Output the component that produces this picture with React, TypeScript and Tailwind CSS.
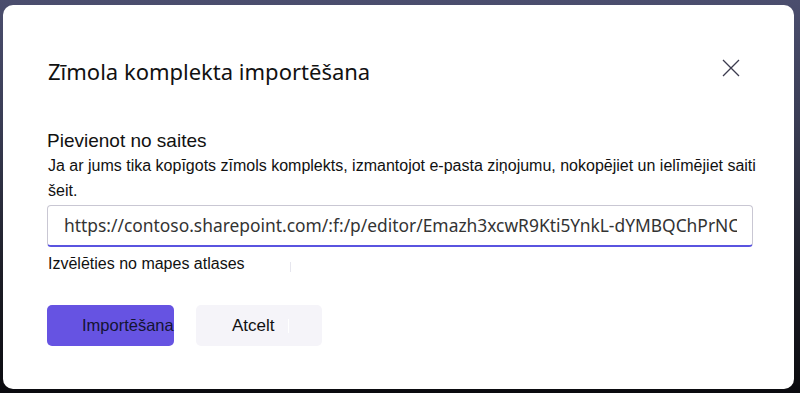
import React from "react";

export default function App() {
  return (
    <div className="w-[800px] h-[393px] overflow-hidden bg-[linear-gradient(180deg,#4b4e6e_0%,#3a3d55_30%,#1c1d26_70%,#0b0b0f_100%)] pt-[5px] pl-[3px] pr-[6px] pb-[4px]">
      <div className="h-full w-full bg-white rounded-[10px] pl-[44px] pr-[42px] pt-[51px] flex flex-col">
        <div className="flex items-start justify-between">
          <h1
            className="text-[22px] leading-[30px] text-[#111] pl-[1px]"
            style={{ fontFamily: '"Noto Sans", "Open Sans", sans-serif' }}
          >
            Zīmola komplekta importēšana
          </h1>
          <svg width="18" height="18" viewBox="0 0 18 18" className="mr-[12px] mt-[3px]">
            <path d="M1 1 L17 17 M17 1 L1 17" stroke="#3c3b4f" strokeWidth="1.3" fill="none" />
          </svg>
        </div>
        <div
          className="mt-[44px] text-[19px] leading-[22px] text-[#111]"
          style={{ fontFamily: '"Liberation Sans", Arial, sans-serif' }}
        >
          Pievienot no saites
        </div>
        <p
          className="mt-[1px] w-[712px] text-[16px] leading-[25px] text-[#111] pl-[1px]"
          style={{ fontFamily: '"Liberation Sans", Arial, sans-serif' }}
        >
          Ja ar jums tika kopīgots zīmols komplekts, izmantojot e-pasta ziņojumu, nokopējiet un ielīmējiet saiti šeit.
        </p>
        <div className="mt-[2px] h-[42px] w-[706px] rounded-[4px] border border-[#c9c7d3] border-b-[2px] border-b-[#5a54e0] pl-[16px] pr-[15px] flex items-center overflow-hidden">
          <span
            className="whitespace-nowrap overflow-hidden text-[17.4px] text-[#333] block"
            style={{ fontFamily: '"Noto Sans", "Open Sans", sans-serif' }}
          >
            https://contoso.sharepoint.com/:f:/p/editor/Emazh3xcwR9Kti5YnkL-dYMBQChPrNC
          </span>
        </div>
        <div className="mt-[6px] flex items-center">
          <span
            className="text-[16px] leading-[22px] text-[#111] pl-[1px]"
            style={{ fontFamily: '"Liberation Sans", Arial, sans-serif' }}
          >
            Izvēlēties no mapes atlases
          </span>
          <span className="ml-[45px] w-px h-[10px] bg-[#e6e6ee] mt-[6px]" />
        </div>
        <div className="mt-[30px] flex gap-[22px]">
          <button
            className="w-[127px] h-[41px] rounded-[5px] bg-[#6653e2] flex items-center pl-[35px] whitespace-nowrap text-[16.5px] text-[#141433]"
            style={{ fontFamily: '"Liberation Sans", Arial, sans-serif' }}
          >
            Importēšana
          </button>
          <button
            className="w-[126px] h-[41px] rounded-[5px] bg-[#f5f4f9] flex items-center pl-[36px] text-[17px] text-[#111]"
            style={{ fontFamily: '"Liberation Sans", Arial, sans-serif' }}
          >
            Atcelt
            <span className="ml-[13px] w-px h-[14px] bg-[#ffffff]" />
          </button>
        </div>
      </div>
    </div>
  );
}
